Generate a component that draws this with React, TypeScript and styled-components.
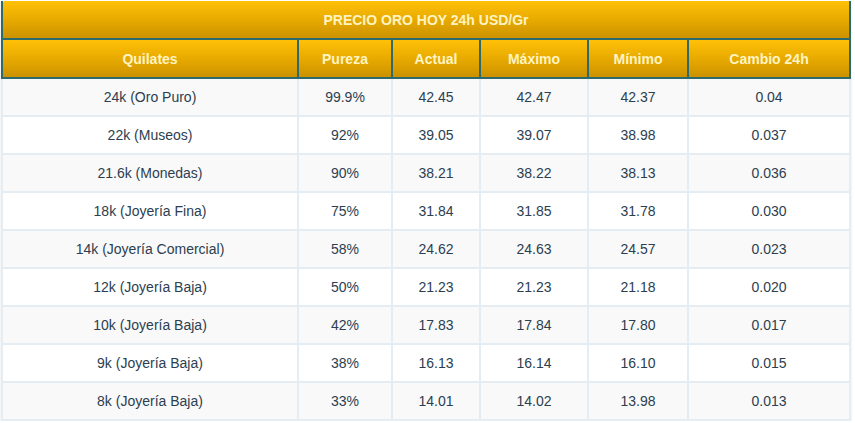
import styled, { createGlobalStyle } from 'styled-components'

type Row = {
  quilates: string
  pureza: string
  actual: string
  maximo: string
  minimo: string
  cambio: string
}

const rows: Array<Row> = [
  { quilates: '24k (Oro Puro)', pureza: '99.9%', actual: '42.45', maximo: '42.47', minimo: '42.37', cambio: '0.04' },
  { quilates: '22k (Museos)', pureza: '92%', actual: '39.05', maximo: '39.07', minimo: '38.98', cambio: '0.037' },
  { quilates: '21.6k (Monedas)', pureza: '90%', actual: '38.21', maximo: '38.22', minimo: '38.13', cambio: '0.036' },
  { quilates: '18k (Joyería Fina)', pureza: '75%', actual: '31.84', maximo: '31.85', minimo: '31.78', cambio: '0.030' },
  { quilates: '14k (Joyería Comercial)', pureza: '58%', actual: '24.62', maximo: '24.63', minimo: '24.57', cambio: '0.023' },
  { quilates: '12k (Joyería Baja)', pureza: '50%', actual: '21.23', maximo: '21.23', minimo: '21.18', cambio: '0.020' },
  { quilates: '10k (Joyería Baja)', pureza: '42%', actual: '17.83', maximo: '17.84', minimo: '17.80', cambio: '0.017' },
  { quilates: '9k (Joyería Baja)', pureza: '38%', actual: '16.13', maximo: '16.14', minimo: '16.10', cambio: '0.015' },
  { quilates: '8k (Joyería Baja)', pureza: '33%', actual: '14.01', maximo: '14.02', minimo: '13.98', cambio: '0.013' },
]

const columns = [
  { label: 'Quilates', width: 296 },
  { label: 'Pureza', width: 94 },
  { label: 'Actual', width: 88 },
  { label: 'Máximo', width: 108 },
  { label: 'Mínimo', width: 100 },
  { label: 'Cambio 24h', width: 162 },
]

const GlobalStyle = createGlobalStyle`
  body {
    margin: 0;
    background: #ffffff;
    font-family: "Liberation Sans", Arial, sans-serif;
  }
`

const Wrapper = styled.div`
  padding: 1px 0 0 1px;
`

const Table = styled.table`
  width: 848px;
  border-collapse: collapse;
  table-layout: fixed;
  box-shadow: 0 1px 2px rgba(0, 0, 0, 0.12);
`

const GoldCell = styled.th`
  height: 37px;
  padding: 0;
  background: linear-gradient(to bottom, #ffc107 0%, #e8aa00 50%, #cc9200 100%);
  border: 2px solid #2d6a6c;
  color: #fff4c2;
  font-size: 14px;
  font-weight: bold;
  text-align: center;
  vertical-align: middle;
`

const TitleCell = styled(GoldCell)`
  height: 37px;
  border-top: none;
  border-top-left-radius: 3px;
`

const BodyRow = styled.tr<{ $striped: boolean }>`
  background: ${(p) => (p.$striped ? '#f9f9f9' : '#ffffff')};
`

const Cell = styled.td`
  height: 36px;
  padding: 0;
  border: 2px solid #e4edf3;
  color: #2c3e50;
  font-size: 14px;
  text-align: center;
  vertical-align: middle;
`

export default function App() {
  return (
    <>
      <GlobalStyle />
      <Wrapper>
        <Table>
          <colgroup>
            {columns.map((c) => (
              <col key={c.label} style={{ width: c.width }} />
            ))}
          </colgroup>
          <thead>
            <tr>
              <TitleCell colSpan={6}>PRECIO ORO HOY 24h USD/Gr</TitleCell>
            </tr>
            <tr>
              {columns.map((c) => (
                <GoldCell key={c.label}>{c.label}</GoldCell>
              ))}
            </tr>
          </thead>
          <tbody>
            {rows.map((r, i) => (
              <BodyRow key={r.quilates} $striped={i % 2 === 0}>
                <Cell>{r.quilates}</Cell>
                <Cell>{r.pureza}</Cell>
                <Cell>{r.actual}</Cell>
                <Cell>{r.maximo}</Cell>
                <Cell>{r.minimo}</Cell>
                <Cell>{r.cambio}</Cell>
              </BodyRow>
            ))}
          </tbody>
        </Table>
      </Wrapper>
    </>
  )
}
